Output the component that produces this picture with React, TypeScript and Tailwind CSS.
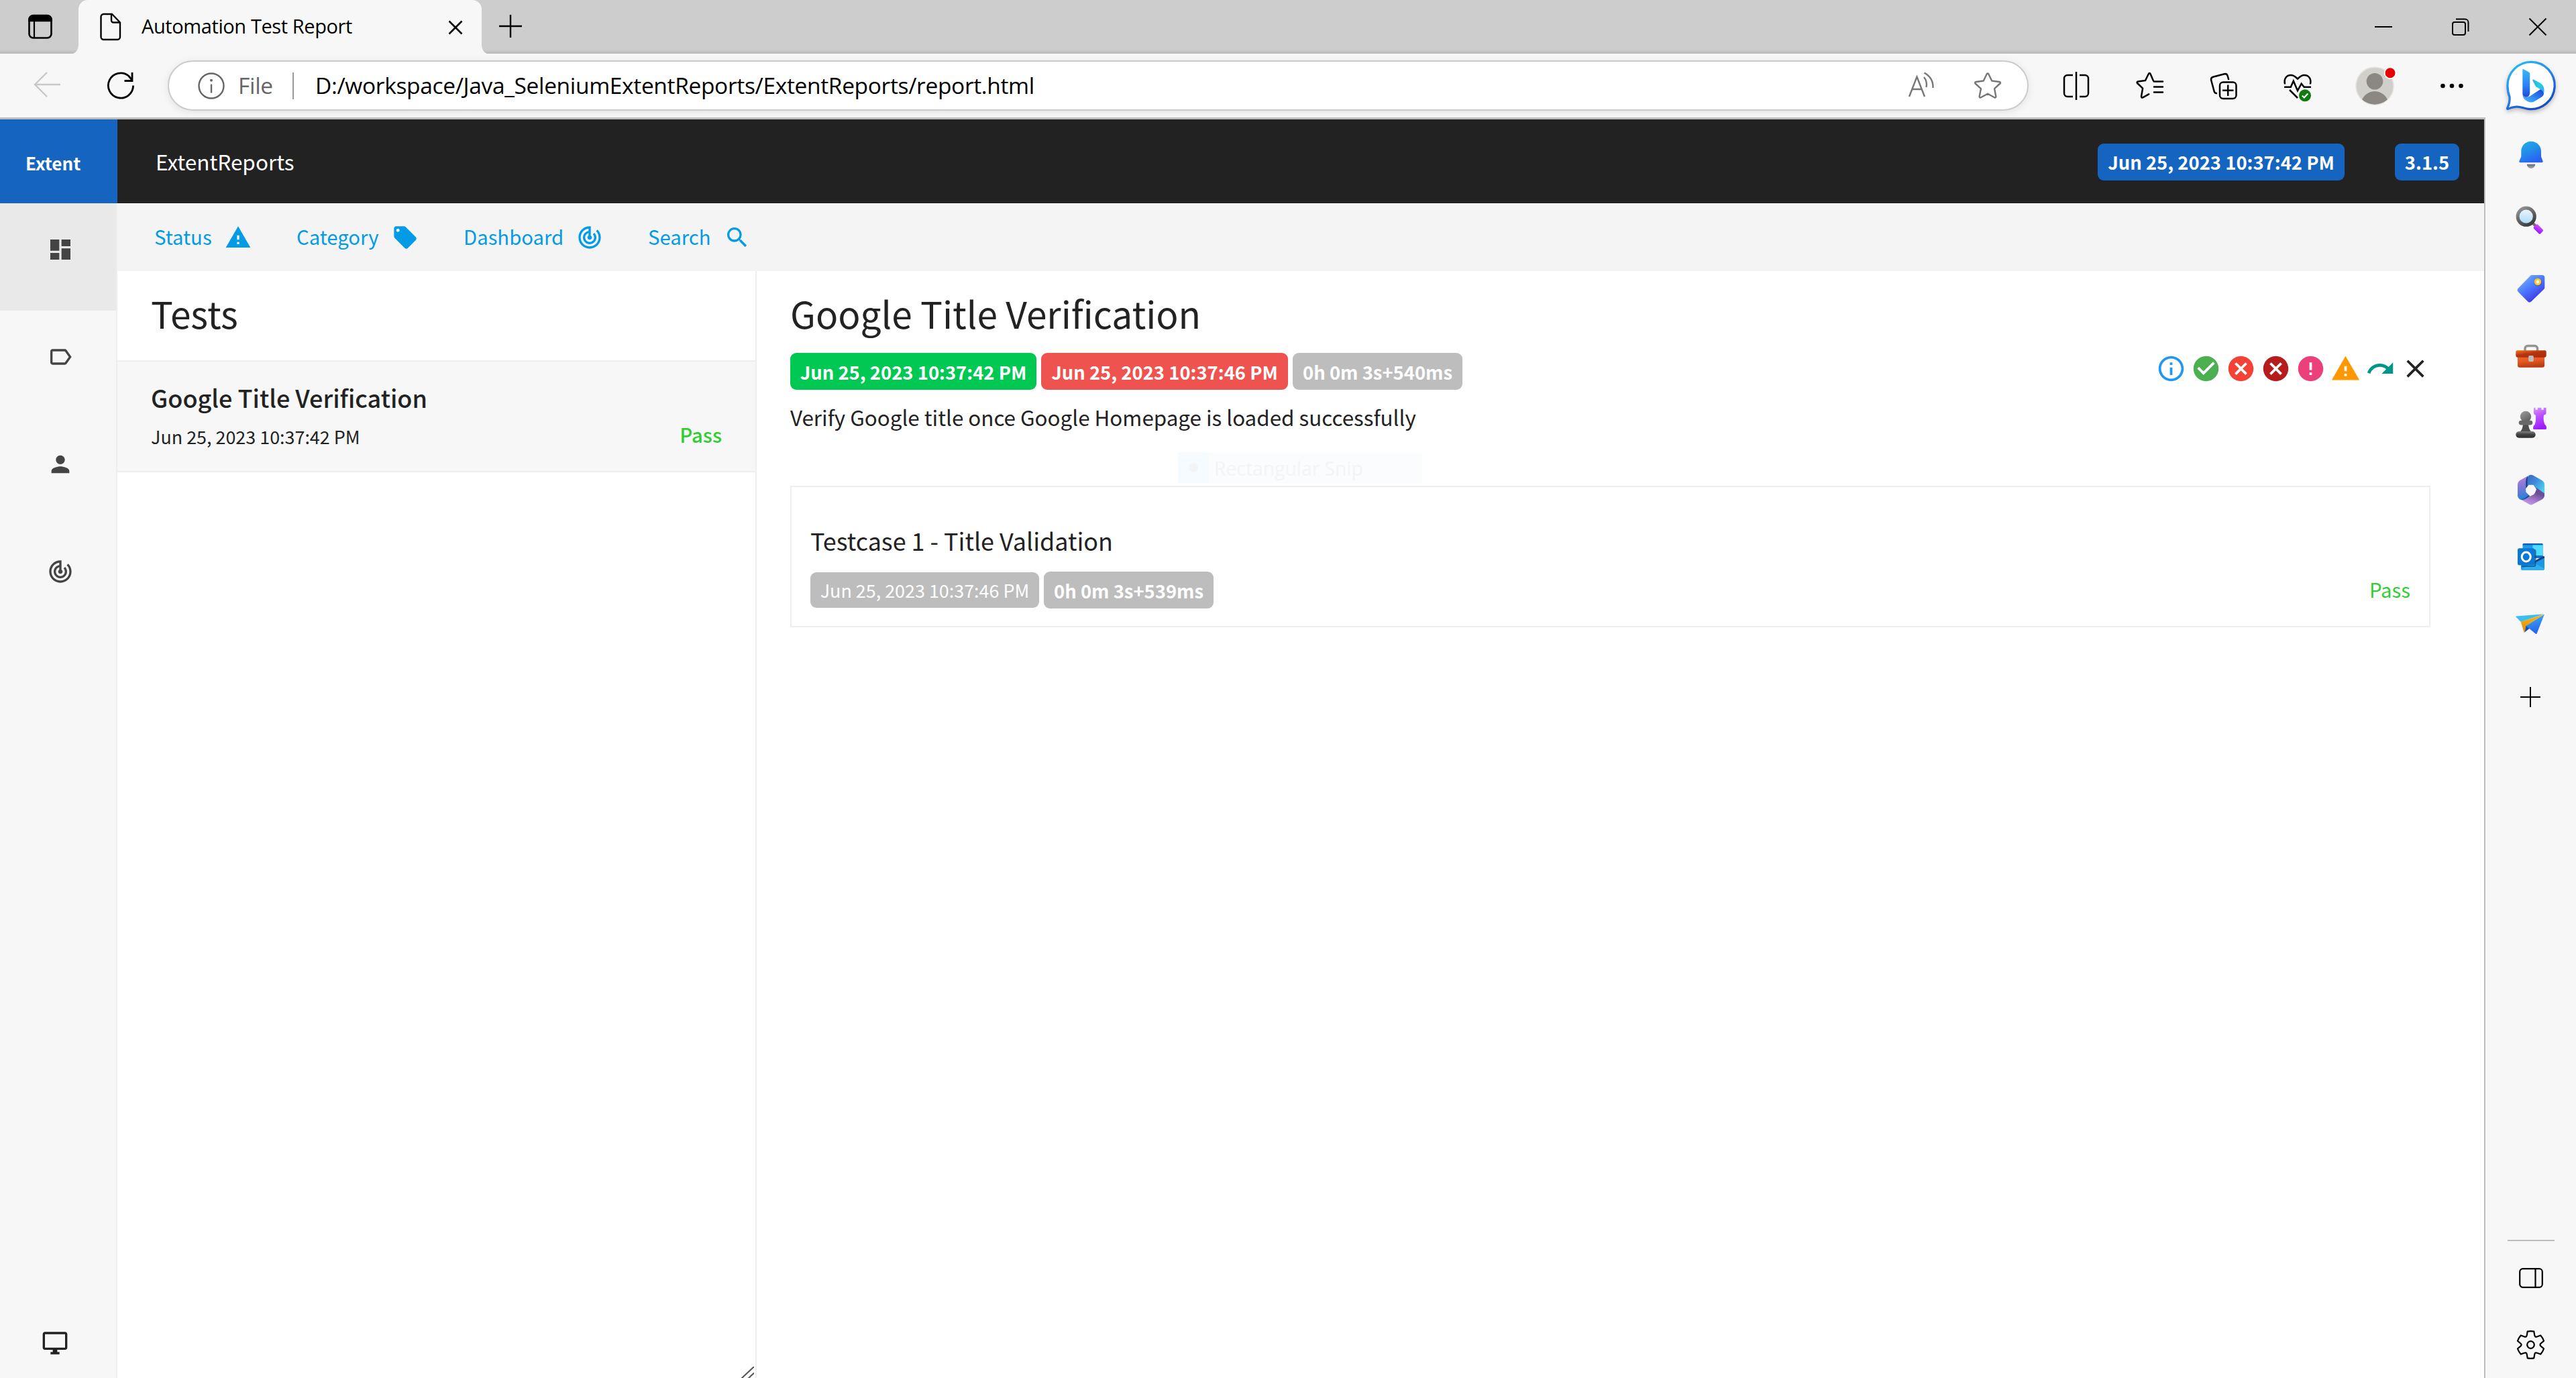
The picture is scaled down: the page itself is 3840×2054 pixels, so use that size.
import React from 'react';
import {
  MdCancel,
  MdCheckCircle,
  MdClose,
  MdDashboard,
  MdError,
  MdInfoOutline,
  MdLabelOutline,
  MdLocalOffer,
  MdPerson,
  MdRedo,
  MdSearch,
  MdTrackChanges,
  MdWarning,
} from 'react-icons/md';

/* ---------- Browser chrome ---------- */

function TabStrip() {
  return (
    <div className="flex h-[80px] shrink-0 bg-[#cdcdcd] bg-linear-to-t from-[#b8b8b8] via-[#cdcdcd] via-[6px] to-[#cdcdcd]">
      <div className="flex w-[117px] items-center pl-[40px]">
        <svg width="40" height="40" viewBox="0 0 40 40" fill="none" stroke="#000" strokeWidth="2.6">
          <rect x="3.5" y="3.5" width="33" height="33" rx="6" />
          <path d="M3.5 11V9a6 6 0 0 1 6-6h21a6 6 0 0 1 6 6v2z" fill="#000" />
          <path d="M11 11v25" strokeWidth="2.2" />
        </svg>
      </div>
      <div className="relative flex w-[601px] items-center rounded-t-[14px] bg-[#f7f7f7] pl-[32px]">
        <svg className="absolute -left-[8px] bottom-0" width="8" height="14" viewBox="0 0 8 14">
          <path d="M8 0v14H0C5 12 8 7 8 0z" fill="#f7f7f7" />
        </svg>
        <svg className="absolute -right-[8px] bottom-0" width="8" height="14" viewBox="0 0 8 14">
          <path d="M0 0v14h8C3 12 0 7 0 0z" fill="#f7f7f7" />
        </svg>
        <svg className="shrink-0" width="32" height="42" viewBox="0 0 32 42" fill="none" stroke="#000" strokeWidth="2.4" strokeLinejoin="round">
          <path d="M5.5 2H18l12 12.5V36a4 4 0 0 1-4 4H5.5a4 4 0 0 1-4-4V6a4 4 0 0 1 4-4z" />
          <path d="M17 2v9.5a3 3 0 0 0 3 3h10" />
        </svg>
        <span className="ml-[30px] w-[456px] shrink-0 whitespace-nowrap pb-[2px] text-[29px] leading-[40px] tracking-[-0.4px] text-black">
          Automation Test Report
        </span>
        <svg className="mt-[2px] shrink-0" width="24" height="24" viewBox="0 0 24 24" stroke="#000" strokeWidth="2.6">
          <path d="M2.5 2.5l19 19M21.5 2.5l-19 19" />
        </svg>
      </div>
      <div className="flex flex-1 items-center pb-[3px] pl-[25px]">
        <svg width="36" height="36" viewBox="0 0 36 36" stroke="#000" strokeWidth="2.4">
          <path d="M18 1v34M1 18h34" />
        </svg>
      </div>
      <div className="flex w-[345px] items-center pb-[1px]">
        <div className="flex w-[115px] justify-center">
          <svg width="26" height="26" viewBox="0 0 26 26" stroke="#000" strokeWidth="2">
            <path d="M0 13h26" />
          </svg>
        </div>
        <div className="flex w-[115px] justify-center">
          <svg width="26" height="26" viewBox="0 0 26 26" fill="none" stroke="#000" strokeWidth="2">
            <rect x="1" y="6" width="19" height="19" rx="3" />
            <path d="M6 1.5h13.5a5 5 0 0 1 5 5V20" />
          </svg>
        </div>
        <div className="flex w-[115px] justify-center">
          <svg width="26" height="26" viewBox="0 0 26 26" stroke="#000" strokeWidth="2">
            <path d="M.5.5l25 25M25.500.5l-25 25" />
          </svg>
        </div>
      </div>
    </div>
  );
}

function BingLogo() {
  return (
    <svg className="drop-shadow-[0_3px_3px_rgba(0,0,0,0.25)]" width="78" height="78" viewBox="0 0 80 80">
      <defs>
        <linearGradient id="bubble" x1="0" y1="0" x2="0.6" y2="1">
          <stop offset="0" stopColor="#1ac8f0" />
          <stop offset="0.45" stopColor="#2b8ff0" />
          <stop offset="1" stopColor="#174ec4" />
        </linearGradient>
        <linearGradient id="stem" x1="0" y1="0" x2="0" y2="1">
          <stop offset="0" stopColor="#37b8fb" />
          <stop offset="0.6" stopColor="#2b80f5" />
          <stop offset="1" stopColor="#2048d8" />
        </linearGradient>
        <linearGradient id="bowl" x1="0" y1="1" x2="1" y2="0.2">
          <stop offset="0" stopColor="#4ac0fb" />
          <stop offset="0.5" stopColor="#2f8af5" />
          <stop offset="1" stopColor="#2148de" />
        </linearGradient>
        <linearGradient id="leaf" x1="0" y1="0" x2="1" y2="1">
          <stop offset="0" stopColor="#35a8e8" />
          <stop offset="0.5" stopColor="#20d0e0" />
          <stop offset="1" stopColor="#3fa0ee" />
        </linearGradient>
      </defs>
      <path
        d="M40 3.5a36 36 0 1 1-4.5 71.700c-7-1-11-3.700-18-3.200-5 .3-9 1.300-12.500 3-1.500.5-1.700 0-1.300-1 3-6 4-10 3.500-17C5 51.500 4 46 4 39.500a36 36 0 0 1 36-36z"
        fill="#fff"
        stroke="url(#bubble)"
        strokeWidth="3.4"
      />
      <path d="M27 15.500c0-1 .8-1.400 1.700-.9l7.500 4c1.300.7 2 1.900 2 3.400V50c0 4-2 7.300-5.500 7.300S27 55 27 51.500z" fill="url(#stem)" />
      <path d="M27 52c0 3 2.500 5.500 6 5.500 2 0 3.500-.6 5-1.500l16.500-11c3.500 1.500 5.500 4 5 7-.3 3-2.500 5-6.500 7l-8.500 5c-3 1.500-6.500 1.700-9.500-.2C29 61 27 57 27 52z" fill="url(#bowl)" />
      <path d="M42.500 32c-.5-1.200.3-2 1.500-1.500l9 4.500c5 2.500 7.500 7 7 13-.2 2-.3 3-.8 4-.5-3-2-5-4.500-6.500l-6-3.500c-1.200-.7-2-1.600-2.500-3z" fill="url(#leaf)" />
    </svg>
  );
}

function Toolbar() {
  return (
    <div className="flex h-[95px] shrink-0 items-center bg-[#f7f7f7]">
      <div className="ml-[15px] flex w-[110px] justify-center">
        <svg className="mb-[3px]" width="42" height="40" viewBox="0 0 42 40" fill="none" stroke="#c8c8c8" strokeWidth="2.4">
          <path d="M21 2L3 20l18 18M3 20h38" />
        </svg>
      </div>
      <div className="flex w-[110px] justify-center">
        <svg width="42" height="42" viewBox="0 0 42 42" fill="none" stroke="#000" strokeWidth="2.800">
          <path d="M39.600 20.500a18.600 18.600 0 1 1-7-14.500l5 6" />
          <path d="M38 1v12.500H26.500" />
        </svg>
      </div>
      <div className="ml-[15px] flex h-[75px] w-[2774px] items-center rounded-full border-2 border-[#cbcbcb] bg-white pl-[43px] pr-[39px] shadow-[0_2px_12px_rgba(0,0,0,0.09)]">
        <svg width="40" height="40" viewBox="0 0 40 40" fill="none" stroke="#666" strokeWidth="2.4">
          <circle cx="20" cy="20" r="18.500" />
          <path d="M20 17.500v13" />
          <circle cx="20" cy="11.800" r="2" fill="#666" stroke="none" />
        </svg>
        <span className="ml-[20px] w-[81px] pb-[2px] text-[33.5px] leading-[50px] tracking-[-0.3px] text-[#666]">File</span>
        <span className="h-[40px] w-[2px] bg-[#999]" />
        <span className="ml-[32px] flex-1 whitespace-nowrap pb-[2px] text-[33.5px] leading-[50px] tracking-[-0.34px] text-black">
          D:/workspace/Java_SeleniumExtentReports/ExtentReports/report.html
        </span>
        <svg className="mb-[4px]" width="40" height="38" viewBox="0 0 40 38" fill="none" stroke="#767676" strokeWidth="2.4">
          <path d="M2 37L13.500 7.500 25 37M6.500 26h14" />
          <path d="M24 8c3.500 4 4.500 9.500 3.500 15M24.500 1.500c8 4.500 13.500 12 13 22.500" />
        </svg>
        <svg className="ml-[59px]" width="40" height="40" viewBox="0 0 40 40" fill="none" stroke="#767676" strokeWidth="2.4" strokeLinejoin="round">
          <path d="M18.700 2.300a1.500 1.500 0 0 1 2.600 0l4.900 10.200 11.300 1.500c1.300.2 1.800 1.600.9 2.500l-8.300 7.700 2.200 11.500c.2 1.300-1 2.200-2.200 1.600L20 31.800l-10.100 5.500c-1.200.6-2.400-.3-2.200-1.600l2.200-11.500-8.300-7.700c-.9-.9-.4-2.300.9-2.500l11.300-1.500z" />
        </svg>
      </div>
      <div className="ml-[16px] flex w-[110px] justify-center">
        <svg width="40" height="42" viewBox="0 0 40 42" fill="none" stroke="#000" strokeWidth="2.5">
          <path d="M20 0v42M15 5H7a5 5 0 0 0-5 5v22a5 5 0 0 0 5 5h8M25 5h8a5 5 0 0 1 5 5v22a5 5 0 0 1-5 5h-8" />
        </svg>
      </div>
      <div className="flex w-[110px] justify-center">
        <svg width="42" height="42" viewBox="0 0 42 42" fill="none" stroke="#000" strokeWidth="2.5" strokeLinejoin="round" strokeLinecap="round">
          <path d="M26 13.500L21.500 3a1.400 1.400 0 0 0-2.600 0L14 13 3 14.500c-1.300.2-1.800 1.600-.9 2.500l8 7.700-2.100 12c-.2 1.300 1 2.200 2.200 1.600l9-5" />
          <path d="M27 14.500h13M27 22.500h13M27 30.500h13" />
        </svg>
      </div>
      <div className="flex w-[110px] justify-center">
        <svg width="50" height="50" viewBox="0 0 50 50" fill="none" stroke="#000" strokeWidth="2.5">
          <rect x="19" y="19.500" width="24.500" height="24.500" rx="5" />
          <path d="M31.200 23.500v16.500M23 31.700h16.500" />
          <path d="M32.300 16l-1.500-5.500c-.7-2.800-2.300-3.800-5-3.200L9.500 11.500c-2.800.8-4 2.500-3.300 5.300l4.500 16.500c.5 2 1.800 2.800 4.300 3" />
        </svg>
      </div>
      <div className="flex w-[110px] justify-center">
        <svg width="50" height="50" viewBox="0 0 50 50" fill="none" stroke="#000" strokeWidth="2.5">
          <path d="M6.200 22.500C4 14.500 8.500 9 15 9c4 0 6.500 2 10 5.500C28.500 11 31 9 35 9c6.500 0 11 5.500 8.800 13.500" />
          <path d="M5 26.700h9.800l4-9 6.200 14.500 5.700-10.500 4 5H45" />
          <path d="M13 31l12 12" />
          <circle cx="36" cy="39.300" r="9" fill="#0f7b0f" stroke="none" />
          <path d="M31.800 39.500l3 3 5.500-6" stroke="#fff" strokeWidth="2.200" />
        </svg>
      </div>
      <div className="flex w-[120px] justify-center">
        <svg width="64" height="60" viewBox="0 0 64 60">
          <defs>
            <clipPath id="face">
              <circle cx="32" cy="30.200" r="27.500" />
            </clipPath>
          </defs>
          <circle cx="32" cy="30.200" r="28" fill="#d0cfca" stroke="#e4e3e0" strokeWidth="1.5" />
          <circle cx="32" cy="23.200" r="12.300" fill="#8b8783" />
          <ellipse cx="32" cy="60" rx="21" ry="22" fill="#8b8783" clipPath="url(#face)" />
          <circle cx="55" cy="10.800" r="8.300" fill="#e60000" stroke="#fff" strokeWidth="1.6" />
        </svg>
      </div>
      <div className="flex w-[110px] justify-center">
        <svg width="40" height="10" viewBox="0 0 40 10">
          <circle cx="6.500" cy="5" r="3.300" />
          <circle cx="20" cy="5" r="3.300" />
          <circle cx="33.500" cy="5" r="3.300" />
        </svg>
      </div>
      <div className="flex w-[125px] justify-center">
        <BingLogo />
      </div>
    </div>
  );
}

/* ---------- Edge sidebar ---------- */

const gearPath = (() => {
  const rot = (x: number, y: number, k: number) => {
    const a = (k * Math.PI) / 3;
    return `${(x * Math.cos(a) - y * Math.sin(a) + 30.5).toFixed(2)} ${(x * Math.sin(a) + y * Math.cos(a) + 30.5).toFixed(2)}`;
  };
  let d = `M${rot(-4.8, -19.8, 0)}`;
  for (let k = 0; k < 6; k++) {
    d += `Q${rot(0, -20.8, k)} ${rot(4.8, -19.8, k)}L${rot(5.7, -14.6, k)}Q${rot(6.2, -10.7, k)} ${rot(-5.7, -14.6, k + 1)}L${rot(-4.8, -19.8, k + 1)}`;
  }
  return d + 'z';
})();

function SideSlot({ children }: { children: React.ReactNode }) {
  return (
    <div className="flex h-[100px] items-center justify-center">
      <svg width="60" height="60" viewBox="0 0 60 60" className="-ml-px">
        {children}
      </svg>
    </div>
  );
}

function Gradient({ id, stops, x2 = 0, y2 = 1 }: { id: string; stops: string[]; x2?: number; y2?: number }) {
  return (
    <linearGradient id={id} x1="0" y1="0" x2={x2} y2={y2}>
      {stops.map((c, i) => (
        <stop key={i} offset={i / (stops.length - 1)} stopColor={c} />
      ))}
    </linearGradient>
  );
}

function EdgeSidebar() {
  return (
    <div className="flex w-[135px] shrink-0 flex-col bg-[#f7f7f7] pt-[6px]">
      <SideSlot>
        <Gradient id="bell" stops={['#1fb0ea', '#2191e8', '#2b62f0']} x2={0.5} />
        <Gradient id="clap" stops={['#6a6d70', '#a5a9ac']} />
        <path d="M31 9.700c-8.400 0-14.700 6.500-14.700 14.800v8l-2.900 6.600c-.4 1 .2 2.200 1.300 2.200h32.600c1.100 0 1.700-1.200 1.300-2.200L46 32.500v-8c0-8.300-6.600-14.800-15-14.800z" fill="url(#bell)" />
        <path d="M24.800 43.700h12.400c0 3.600-2.800 6.300-6.200 6.300s-6.200-2.700-6.200-6.300z" fill="url(#clap)" />
      </SideSlot>
      <SideSlot>
        <Gradient id="ring" stops={['#9a9a9a', '#6a6a6a', '#404040']} x2={0.6} />
        <Gradient id="glass" stops={['#f0f7fc', '#a8d8fa']} />
        <Gradient id="grip" stops={['#d850ff', '#a01fff']} x2={0.4} />
        <path d="M33 31l5 5" stroke="#707070" strokeWidth="4" />
        <circle cx="23.700" cy="21.700" r="12.600" fill="url(#glass)" stroke="url(#ring)" strokeWidth="5" />
        <rect x="-6.500" y="-4" width="14" height="8.500" rx="1.800" transform="translate(41.700 40) rotate(45)" fill="url(#grip)" />
      </SideSlot>
      <SideSlot>
        <Gradient id="tag" stops={['#7fc0ff', '#4f7cff', '#3a2ee0']} x2={0.7} />
        <path d="M33 9h14.500a3.800 3.800 0 0 1 3.800 3.800V27c0 1.500-.5 2.600-1.500 3.600L31.500 48.300a4 4 0 0 1-5.600 0L12 34.200a4 4 0 0 1 0-5.600L29.500 10.400c1-1 2-1.400 3.500-1.400z" fill="url(#tag)" />
        <circle cx="41.500" cy="19.800" r="4.200" fill="#e8ecff" stroke="#3d45c8" strokeWidth="3" opacity="0.600" />
        <circle cx="41" cy="19" r="3.900" fill="#f4f0f0" stroke="#f8cc10" strokeWidth="2.700" />
      </SideSlot>
      <SideSlot>
        <Gradient id="lid" stops={['#f07818', '#b83410', '#a82c0e']} x2={0.7} />
        <Gradient id="case" stops={['#e86a30', '#e85a20', '#b83c12']} x2={0.2} />
        <path d="M22 23v-4.500a4 4 0 0 1 4-4h10.500a4 4 0 0 1 4 4V23" fill="none" stroke="#939393" strokeWidth="3.400" />
        <path d="M11 29h40v14.700a3 3 0 0 1-3 3H14a3 3 0 0 1-3-3z" fill="url(#case)" />
        <path d="M8.300 23.300a2 2 0 0 1 2-2h41.400a2 2 0 0 1 2 2v5.500a3 3 0 0 1-3 3H11.300a3 3 0 0 1-3-3z" fill="url(#lid)" />
        <rect x="27.200" y="29" width="7.600" height="9" rx="1.800" fill="#bcbcbc" />
      </SideSlot>
      <SideSlot>
        <Gradient id="rook" stops={['#dc98fc', '#b850ff', '#a01cff']} x2={0.3} />
        <Gradient id="head" stops={['#a0a0a0', '#606060']} x2={0.6} />
        <Gradient id="pawn" stops={['#808080', '#404040', '#303030']} />
        <path d="M35 6.700h2.500v3h3.300v-3h5.600v3h3.300v-3h3.800v7.500a3.500 3.500 0 0 1-3.500 3.300c-1 6 0 11 1.700 14.500 2 1 2.300 3 2.300 5.500a1.500 1.500 0 0 1-1.500 1.500H35.500a1.500 1.500 0 0 1-1.500-1.500c0-2.500.7-4.500 2.500-5.500 1.500-4 2-9 1.200-14.500a3.200 3.200 0 0 1-2.700-3.300z" fill="url(#rook)" />
        <path d="M19 31c-.5 6-2 9-4.500 12h17C29 40 27.500 37 27 31z" fill="#4e4e4e" />
        <circle cx="23" cy="20" r="8.200" fill="url(#head)" />
        <rect x="12.700" y="25.700" width="20.600" height="6.800" rx="3.400" fill="#686868" />
        <rect x="8.300" y="42" width="29.400" height="9.700" rx="4.800" fill="url(#pawn)" />
      </SideSlot>
      <SideSlot>
        <Gradient id="m1" stops={['#c080e0', '#7a78d8', '#2880dc']} x2={0.1} />
        <Gradient id="m2" stops={['#3a62c0', '#3f8ad8', '#48d0f0']} x2={1} y2={0.7} />
        <Gradient id="m3" stops={['#6a4f96', '#a87cd0', '#cfa4f4']} x2={-0.4} y2={0.8} />
        <path d="M26 8.500L14.500 15Q11 17.500 11 21.500V37q0 4 3.300 6.200 3 1.800 6.200.2L29 38l-5.700-5.500v-6z" fill="url(#m1)" />
        <path d="M23.500 26l1-14.500L28 7.600q3-1.800 6 0L47.700 15.300Q51 17.500 51 21.500V34q0 1.800-1.500.8L38 27l-4-4.800h-6z" fill="url(#m2)" />
        <path d="M23.300 27V16q0-4.500 3-7.500-1 2.500-.8 6.500V24z" fill="#12407c" />
        <path d="M38.500 25.500L51 34.500V37q0 4-3.300 6.200L34 50.600q-3 1.700-6 0l-11-6.300 10.500-4.500L35 36q4-4 3.500-10.500z" fill="url(#m3)" />
        <path d="M16 44q4 .5 8-2l5.500-3.500-2.500-1.200-6 4.700z" fill="#14508c" />
        <path d="M27.500 22.300h7l3.800 6.700-3.800 6.700h-7L23.700 29z" fill="#f7f7f7" stroke="#f7f7f7" strokeLinejoin="round" />
      </SideSlot>
      <SideSlot>
        <path d="M18.500 11a2 2 0 0 1 2-2h26.200a2 2 0 0 1 2 2v20H18.500z" fill="#1f9be8" />
        <path d="M18.500 11a2 2 0 0 1 2-2h26.200a2 2 0 0 1 2 2v.5H18.500z" fill="#0f64b8" />
        <path d="M33.500 11.500h15.200V27H33.500z" fill="#4fdcff" />
        <path d="M33.500 27h15.200v4H33.500z" fill="#1470c8" />
        <path d="M16 28l18 9 17-9v18.500a2 2 0 0 1-2 2H18a2 2 0 0 1-2-2z" fill="#1e96e4" />
        <path d="M16 48l18-11 17 9.500v.5a2 2 0 0 1-2 2H18a2 2 0 0 1-2-1z" fill="#2cb0f0" />
        <path d="M49 28l2 .5v2L36.500 38v-3z" fill="#12408c" />
        <path d="M17 42h19V17.500q2.500.5 2.500 3v20q0 3.500-3.500 3.500H17z" fill="#0c4f86" opacity="0.750" />
        <rect x="11" y="16.300" width="25.200" height="25.200" rx="2.500" fill="#0b78d4" />
        <ellipse cx="23.700" cy="29" rx="6.500" ry="6.900" fill="none" stroke="#fff" strokeWidth="3" />
      </SideSlot>
      <SideSlot>
        <Gradient id="wing" stops={['#45b8f5', '#2e8af0', '#2a62ee']} x2={0.2} />
        <Gradient id="fold" stops={['#f5b010', '#d88a10']} x2={-0.3} />
        <path d="M8.500 18.500q-.5-.7.500-.9l41-3.300L15.700 26z" fill="#3cbcf4" />
        <path d="M15.700 25.700L50.500 14.500 24 32l-2.500 9.500q-.6.6-1-.2z" fill="url(#fold)" />
        <path d="M23.500 31.500l-2 10 8-6.500z" fill="#1850b0" />
        <path d="M51 14.500L39.500 43.500q-.6 1-1.600.2L23.500 32z" fill="url(#wing)" />
      </SideSlot>
      <div className="flex h-[116px] items-center justify-center">
        <svg width="30" height="30" viewBox="0 0 30 30" className="-ml-px" stroke="#000" strokeWidth="2">
          <path d="M15 0v30M0 15h30" />
        </svg>
      </div>
      <div className="flex-1" />
      <div className="mb-[5px] ml-[33px] h-[2px] w-[70px] bg-[#bdbdbd]" />
      <div className="flex h-[100px] items-center justify-center">
        <svg width="36" height="30" viewBox="0 0 36 30" fill="none" stroke="#000" strokeWidth="2.200">
          <rect x="1.200" y="1.200" width="33.600" height="27.600" rx="4.500" />
          <path d="M24.500 1v28" />
        </svg>
      </div>
      <div className="flex h-[99px] items-center justify-center">
        <svg width="61" height="61" viewBox="0 0 61 61" fill="none" stroke="#000" strokeWidth="2.200" strokeLinejoin="round">
          <path d={gearPath} />
          <circle cx="30.500" cy="30.500" r="5.300" />
        </svg>
      </div>
    </div>
  );
}

/* ---------- Report ---------- */

function Badge({ className, children }: { className: string; children: React.ReactNode }) {
  return (
    <span className={`flex shrink-0 items-center justify-center whitespace-nowrap rounded-[9px] leading-[40px] text-white ${className}`}>
      {children}
    </span>
  );
}

function ReportHeader() {
  return (
    <header className="flex h-[125px] shrink-0 items-center bg-[#222] text-white">
      <div className="flex h-full w-[175px] items-center bg-[#1565c0] pl-[38px] pt-[6px] text-[26.2px] font-bold">Extent</div>
      <div className="ml-[57px] flex-1 text-[31.5px]">ExtentReports</div>
      <Badge className="mr-[75px] mt-[1px] h-[55px] w-[368px] bg-[#1565c0] text-[27.4px] font-bold">Jun 25, 2023 10:37:42 PM</Badge>
      <Badge className="mr-[37px] mt-[1px] h-[55px] w-[96px] bg-[#1565c0] text-[27.4px] font-bold">3.1.5</Badge>
    </header>
  );
}

function LeftRail() {
  const icons = [MdDashboard, MdLabelOutline, MdPerson, MdTrackChanges];
  return (
    <aside className="flex w-[175px] shrink-0 flex-col border-r-2 border-[#eee] bg-[#f7f7f7]">
      {icons.map((Icon, i) => (
        <div key={i} className={`flex h-[160px] shrink-0 items-start pl-[70px] pt-[49px] text-[40px] text-[#444] ${i === 0 ? 'bg-[#e9e9e9]' : ''}`}>
          <Icon />
        </div>
      ))}
      <div className="flex flex-1 items-end pb-[32px] pl-[62px]">
        <svg width="40" height="40" viewBox="0 0 24 24" fill="#222">
          <path d="M21 2H3c-1.100 0-2 .9-2 2v12c0 1.100.9 2 2 2h7v2H8v2h8v-2h-2v-2h7c1.100 0 2-.9 2-2V4c0-1.100-.9-2-2-2zm0 14H3V4h18v12z" />
        </svg>
      </div>
    </aside>
  );
}

function FilterNav() {
  return (
    <nav className="flex h-[101px] shrink-0 items-center border-t border-white bg-[#f4f4f4] pl-[55px] text-[29.3px] text-[#039be5]">
      <div className="flex w-[212px] items-center">
        <span className="w-[105px] pb-[2px]">Status</span>
        <MdWarning className="text-[40px]" />
      </div>
      <div className="flex w-[249px] items-center">
        <span className="w-[142px] pb-[2px]">Category</span>
        <MdLocalOffer className="text-[40px]" />
      </div>
      <div className="flex w-[275px] items-center">
        <span className="w-[168px] pb-[2px]">Dashboard</span>
        <MdTrackChanges className="text-[40px]" />
      </div>
      <div className="flex items-center">
        <span className="w-[113px] pb-[2px]">Search</span>
        <MdSearch className="text-[40px]" />
      </div>
    </nav>
  );
}

function TestList() {
  return (
    <section className="relative flex w-[953px] shrink-0 flex-col border-r-2 border-[#eee]">
      <h2 className="h-[133px] pl-[50px] pt-[22px] text-[55px] leading-[80px]">Tests</h2>
      <div className="flex h-[167px] flex-col border-y-2 border-[#eee] bg-[#f7f7f7] pl-[50px] pr-[50px] pt-[28px]">
        <div className="text-[36px] font-medium leading-[50px]">Google Title Verification</div>
        <div className="mt-[9px] flex items-center justify-between leading-[40px]">
          <span className="mt-[5px] text-[26.9px]">Jun 25, 2023 10:37:42 PM</span>
          <span className="mb-[4px] text-[29.3px] font-medium text-[#32cd32]">Pass</span>
        </div>
      </div>
      <svg className="absolute bottom-0 right-[2px]" width="19" height="17" viewBox="0 0 19 17" stroke="#555" strokeWidth="2">
        <path d="M0 18L19 0M10 18l9-8.500" />
      </svg>
    </section>
  );
}

function TestDetail() {
  return (
    <section className="relative flex flex-1 flex-col pl-[50px] pr-[80px] pt-[22px]">
      <h2 className="text-[55px] leading-[80px]">Google Title Verification</h2>
      <div className="mt-[20px] flex items-center">
        <Badge className="h-[55px] w-[367px] bg-[#00c853] text-[27.4px] font-bold">Jun 25, 2023 10:37:42 PM</Badge>
        <Badge className="ml-[7px] h-[55px] w-[368px] bg-[#ef5350] text-[27.4px] font-bold">Jun 25, 2023 10:37:46 PM</Badge>
        <Badge className="ml-[7px] h-[55px] w-[253px] bg-[#bdbdbd] text-[27.4px] font-bold">0h 0m 3s+540ms</Badge>
        <div className="mb-[8px] ml-auto flex gap-[7px] text-[45px]">
          <MdInfoOutline className="text-[#2196f3]" />
          <MdCheckCircle className="text-[#4caf50]" />
          <MdCancel className="text-[#f44336]" />
          <MdCancel className="text-[#b71c1c]" />
          <MdError className="text-[#ec407a]" />
          <MdWarning className="text-[#ff9800]" />
          <MdRedo className="text-[#009688]" />
          <MdClose className="text-[#222]" />
        </div>
      </div>
      <p className="mb-[82px] mt-[21px] text-[31.35px] leading-[40px]">Verify Google title once Google Homepage is loaded successfully</p>
      <div className="border-2 border-[#eee] pb-[26px] pl-[28px] pr-[28px] pt-[54px]">
        <div className="text-[35.9px] leading-[50px]">Testcase 1 - Title Validation</div>
        <div className="mt-[22px] flex items-center">
          <Badge className="h-[53px] w-[341px] bg-[#bdbdbd] text-[26.9px]">Jun 25, 2023 10:37:46 PM</Badge>
          <Badge className="ml-[7px] h-[55px] w-[253px] bg-[#bdbdbd] text-[27.4px] font-bold">0h 0m 3s+539ms</Badge>
          <span className="mb-[4px] ml-auto text-[29.3px] leading-[40px] text-[#32cd32]">Pass</span>
        </div>
      </div>
      <div className="absolute left-[628px] top-[270px] flex h-[46px] w-[364px] items-center bg-[#fbfcfe] font-['Open_Sans','Noto_Sans',sans-serif] text-[28.3px] text-[#f4f4f6]">
        <span className="flex h-full w-[45px] items-center justify-center bg-[#f6fbff]">
          <span className="h-[14px] w-[14px] rounded-full bg-[#f3f4f6]" />
        </span>
        <span className="ml-[9px] mt-[2px]">Rectangular Snip</span>
      </div>
    </section>
  );
}

export default function App() {
  return (
    <div className="flex h-[2054px] w-[3840px] flex-col overflow-hidden bg-white font-['Open_Sans','Noto_Sans',sans-serif]">
      <TabStrip />
      <Toolbar />
      <div className="flex min-h-0 flex-1">
        <main className="flex w-[3705px] shrink-0 flex-col border-r-2 border-t-[3px] border-[#bdbdbd] font-['Noto_Sans_CJK_SC','Noto_Sans',sans-serif] text-[#222]">
          <ReportHeader />
          <div className="flex min-h-0 flex-1">
            <LeftRail />
            <div className="flex min-w-0 flex-1 flex-col">
              <FilterNav />
              <div className="flex min-h-0 flex-1">
                <TestList />
                <TestDetail />
              </div>
            </div>
          </div>
        </main>
        <EdgeSidebar />
      </div>
    </div>
  );
}
